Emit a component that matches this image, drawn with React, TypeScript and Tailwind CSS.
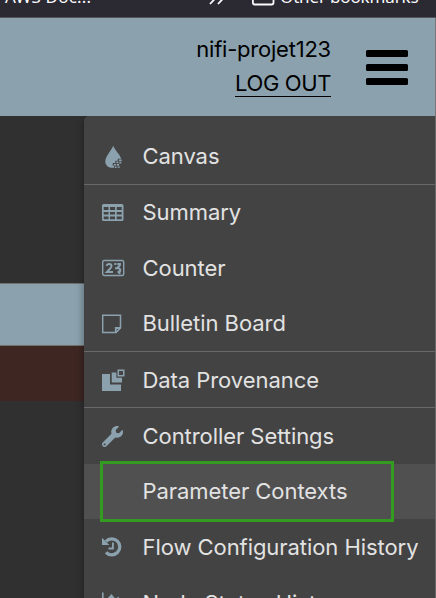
import React from "react";

const C = "#8ba2ae";

function Droplet() {
  return (
    <svg width="24" height="24" viewBox="0 0 24 24">
      <path d="M11.300 .8C9.300 5.600 3.300 11.200 3.300 16.400C3.300 20.400 6.500 22.800 11 22.800H12.200V20.800H10.700V18H13.300V15.800H15.800V13.800H19.200C18 9.600 13 5.400 11.300 .8Z" fill={C} />
      <path d="M11.700 18.900h2.300v1.700h-2.300zM14.400 16.600h2v1.600h-2zM17 14.400h2.700v1.800H17zM14.800 19h2.300v1.700h-2.300zM13 21.500h1.600v1.400h-1.600zM17.400 17h1.900v1.600h-1.900zM15.600 21.400h2.200v1.300h-2.200z" fill={C} />
    </svg>
  );
}

function Table() {
  return (
    <svg width="24" height="24" viewBox="0 0 24 24">
      <path fillRule="evenodd" fill={C} d="M1.500 3H20Q21.500 3 21.500 4.500V18.500Q21.500 20 20 20H1.500Q0 20 0 18.500V4.500Q0 3 1.500 3ZM1.700 6V9H6.500V6ZM8 6V9H13V6ZM14.700 6V9H19.700V6ZM1.700 11V13.500H6.500V11ZM8 11V13.500H13V11ZM14.700 11V13.500H19.700V11ZM1.700 15.500V18.200H6.500V15.500ZM8 15.500V18.200H13V15.500ZM14.700 15.500V18.200H19.700V15.500Z" />
    </svg>
  );
}

function Counter() {
  return (
    <svg width="24" height="24" viewBox="0 0 24 24" fill="none" stroke={C}>
      <rect x=".7" y="4.500" width="21" height="15" rx="1.500" strokeWidth="1.400" />
      <path d="M4.700 9.900Q5 7.900 7.200 7.900Q9.500 7.900 9.500 9.900Q9.500 11.100 8.200 12.500L5 15.900H11" strokeWidth="2" />
      <path d="M12.300 7.900H14.500M15.300 7.900H17.900V9.200L15.300 12M13 12.200H15.800Q18.300 12.400 18.300 14.200Q18.300 16 15.500 16M15.800 15.600L18.300 17.800" strokeWidth="2" />
    </svg>
  );
}

function Note() {
  return (
    <svg width="24" height="24" viewBox="0 0 24 24" fill="none" stroke={C} strokeWidth="1.500">
      <path d="M.7 3.200H18.500V16L14 20.600H.7Z" />
      <path d="M13.800 20.400V16H18.400" strokeWidth="1.800" />
    </svg>
  );
}

function Provenance() {
  return (
    <svg width="24" height="24" viewBox="0 0 24 24" fill={C}>
      <path d="M0 5H8V15.500H19V22H0Z" />
      <path d="M9.700 3.500H14.400V8.800H20V13.600H9.700Z" />
      <path fillRule="evenodd" d="M15.500 .5H22.500V7.500H15.500ZM17 2V6H21V2Z" />
    </svg>
  );
}

function Wrench() {
  return (
    <svg width="21" height="21" viewBox="0 0 512 512" fill={C}>
      <path d="M507.730 109.100c-2.240-9.030-13.540-12.090-20.120-5.510l-74.360 74.360-67.880-11.310-11.310-67.880 74.360-74.360c6.620-6.620 3.430-17.900-5.660-20.160-47.380-11.740-99.550.91-136.580 37.930-39.640 39.640-50.550 97.100-34.050 147.200L18.740 402.760c-24.990 24.990-24.990 65.510 0 90.500 24.990 24.990 65.510 24.990 90.500 0l213.210-213.210c50.120 16.710 107.470 5.680 147.370-34.220 37.070-37.070 49.700-89.320 37.910-136.730zM64 472c-13.250 0-24-10.750-24-24 0-13.260 10.750-24 24-24s24 10.740 24 24c0 13.250-10.750 24-24 24z" />
    </svg>
  );
}

function History() {
  return (
    <svg width="20" height="20" viewBox="0 0 20 20" fill="none" stroke={C}>
      <path d="M4 4.300A8 8 0 1 1 4 15.300" strokeWidth="3.300" />
      <path d="M0 .8L7.300 8H0Z" fill={C} stroke="none" />
      <path d="M10.900 5.500V11.500H6.500" strokeWidth="1.900" />
    </svg>
  );
}

function Chart() {
  return (
    <svg width="24" height="24" viewBox="0 0 24 24" fill={C}>
      <path d="M0 1.500H1.600V19H20V20.500H0ZM3.500 14V9.500L9.500 3L13.500 8L16.500 5.500L19 14Z" />
    </svg>
  );
}

const rows = [
  { label: "Canvas", icon: <Droplet />, cls: "h-[57px] border-b pt-px" },
  { label: "Summary", icon: <Table />, cls: "h-[55px]" },
  { label: "Counter", icon: <Counter />, cls: "h-[56px]" },
  { label: "Bulletin Board", icon: <Note />, cls: "h-[56px] border-b" },
  { label: "Data Provenance", icon: <Provenance />, cls: "h-[56px] border-b pt-[2px]" },
  { label: "Controller Settings", icon: <Wrench />, cls: "h-[56px]" },
  { label: "Parameter Contexts", icon: null, cls: "h-[55px] bg-[#505050]" },
  { label: "Flow Configuration History", icon: <History />, cls: "h-[56px]" },
  { label: "Node Status History", icon: <Chart />, cls: "h-[56px]" },
];

export default function App() {
  return (
    <div className="flex h-[598px] w-[436px] flex-col overflow-hidden bg-[#303030] font-['Inter',sans-serif]">
      <div className="flex h-[18px] shrink-0 items-start overflow-hidden border-b border-[#55545c] bg-[#2b2a33] font-['Noto_Sans','Open_Sans',sans-serif] text-[17px] leading-6 text-[#fbfbfe]">
        <span className="-mt-[15px] ml-[5px] w-[204px] whitespace-nowrap tracking-[0.2px]">AWS Doc...</span>
        <svg className="-mt-[13px] w-[43px] shrink-0" width="43" height="20" viewBox="0 0 43 20" fill="none" stroke="#fbfbfe" strokeWidth="1.800">
          <path d="M1 2L8 9.500L1 17M9 2L16 9.500L9 17" />
        </svg>
        <svg className="-mt-[13px] w-[28px] shrink-0" width="28" height="20" viewBox="0 0 28 20" fill="none" stroke="#fbfbfe" strokeWidth="1.800">
          <path d="M1 2H9L11 5H21.500V15.500Q21.500 17.500 19.500 17.500H2.500Q.9 17.500.9 15.500Z" />
        </svg>
        <span className="-mt-[15px] whitespace-nowrap tracking-[-0.15px]">Other bookmarks</span>
      </div>
      <header className="flex h-[98px] shrink-0 justify-end border-r border-[#77777c] bg-[#8ba2ae] pr-[27px] text-[22px] text-black">
        <div className="flex flex-col items-end pt-[15px] leading-[32px]">
          <div className="tracking-[-0.22px]">nifi-projet123</div>
          <div className="mt-[4px] h-[28px] border-b border-black leading-[29px] tracking-[-0.38px]">LOG OUT</div>
        </div>
        <div className="ml-[35px] mt-[32px] flex w-[42px] flex-col gap-[7px]">
          <div className="h-[7px] rounded-[1.500px] bg-black" />
          <div className="h-[7px] rounded-[1.500px] bg-black" />
          <div className="h-[7px] rounded-[1.500px] bg-black" />
        </div>
      </header>
      <main className="flex h-[482px]">
        <div className="w-[84px] shrink-0 pt-[167px]">
          <div className="h-[63px] border-y border-[#70706d] bg-[#8ba2ae]" />
          <div className="h-[55px] bg-[#3e2723]" />
        </div>
        <nav className="relative grow rounded-tl-[5px] border-r border-[#686868] bg-[#434343] pt-[12px] text-[22px] tracking-[-0.06px] text-[#e2e2e2] shadow-[0_3px_8px_rgba(0,0,0,0.4)] [clip-path:inset(0_0_0_-12px)]">
          {rows.map((r) => (
            <div key={r.label} className={`flex items-center border-[#686868] pl-[18px] ${r.cls}`}>
              <div className="flex w-[40.500px] shrink-0 items-center">{r.icon}</div>
              <span className="whitespace-nowrap">{r.label}</span>
            </div>
          ))}
          <div className="absolute left-[16px] top-[345px] h-[61px] w-[294px] border-[3px] border-[#339b20]" />
        </nav>
      </main>
    </div>
  );
}
